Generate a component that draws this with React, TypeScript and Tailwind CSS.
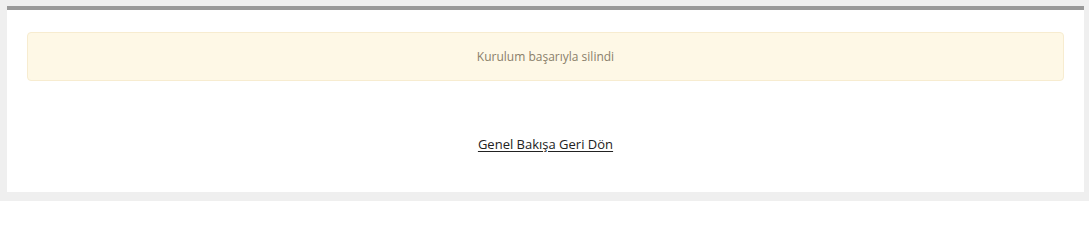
export default function App() {
  return (
    <div className="h-[201px] bg-[#efefef] pl-[7px] pr-[5px] pt-[6px] font-['Open_Sans',sans-serif]">
      <div className="border-t-4 border-[#999999] bg-white px-5 pt-[22px] pb-[39px]">
        <div className="flex h-[49px] items-center justify-center rounded border border-[#f7ecd0] bg-[#fef8e6] text-[12px] text-[#8a7f6a]">
          Kurulum başarıyla silindi
        </div>
        <div className="mt-[54px] flex justify-center">
          <a href="#" className="text-[13px] leading-[18px] text-[#222222] underline underline-offset-2">
            Genel Bakışa Geri Dön
          </a>
        </div>
      </div>
    </div>
  );
}
